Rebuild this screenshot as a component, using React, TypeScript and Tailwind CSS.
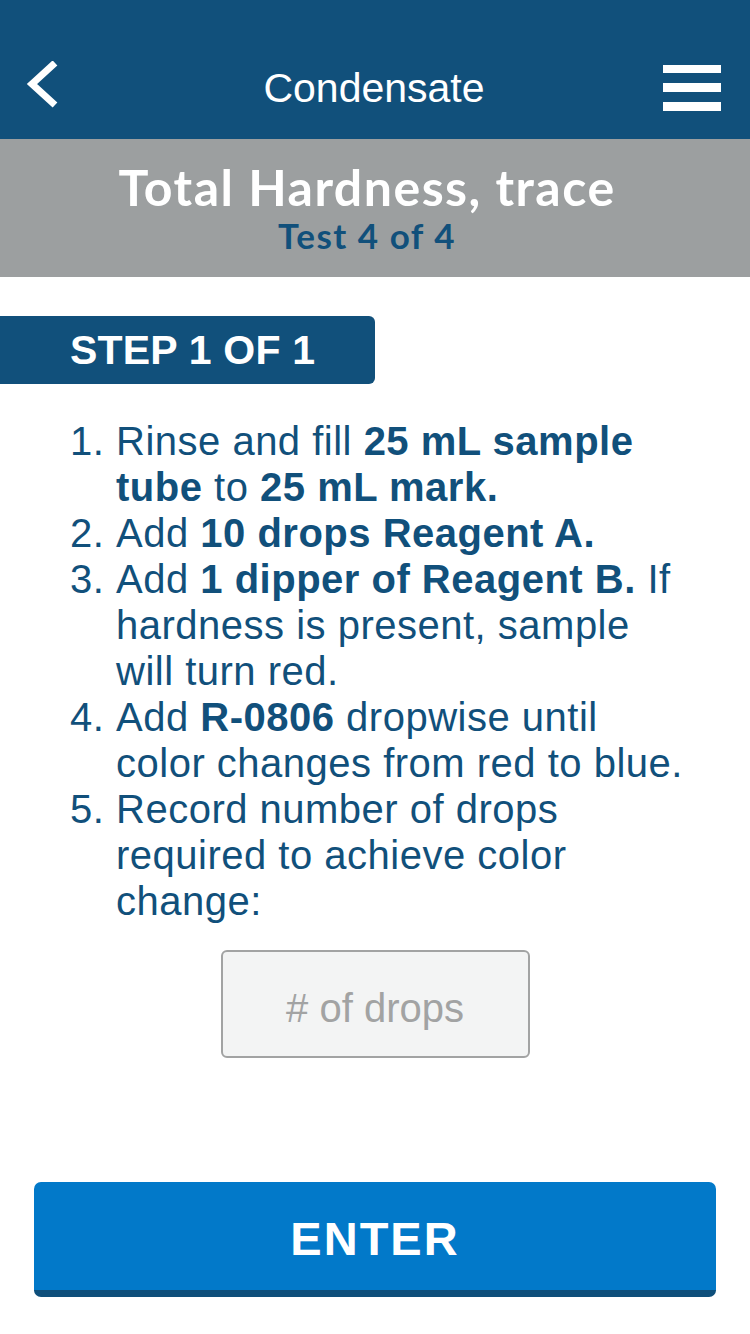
import React from 'react';

const steps: React.ReactNode[] = [
  <>Rinse and fill <b>25 mL sample</b><br /><b>tube</b> to <b>25 mL mark.</b></>,
  <>Add <b>10 drops Reagent A.</b></>,
  <>Add <b>1 dipper of Reagent B.</b> If<br />hardness is present, sample<br />will turn red.</>,
  <>Add <b>R-0806</b> dropwise until<br />color changes from red to blue.</>,
  <>Record number of drops<br />required to achieve color<br />change:</>,
];

export default function App() {
  return (
    <div className="w-[750px] h-[1334px] bg-white overflow-hidden font-['Liberation_Sans',Arial,sans-serif]">
      {/* Top bar */}
      <header className="h-[139px] bg-[#11507b] pt-[38px]">
        <div className="h-[100px] flex items-center pl-[24px] pr-[29px]">
          <div className="w-[60px]">
            <svg width="36" height="48" viewBox="0 0 36 48" className="-mt-[6px]">
              <polyline points="31,2 8,23 31,44" fill="none" stroke="white" strokeWidth="7" strokeLinejoin="miter" />
            </svg>
          </div>
          <h1 className="flex-1 text-center text-white text-[41px] leading-none pl-[3px]">Condensate</h1>
          <div className="w-[60px] flex flex-col items-end gap-[10px]">
            <span className="block w-[58px] h-[8px] bg-white" />
            <span className="block w-[58px] h-[9px] bg-white" />
            <span className="block w-[58px] h-[9px] bg-white" />
          </div>
        </div>
      </header>

      {/* Test title */}
      <section className="h-[138px] bg-[#9c9fa0] pt-[23px] pr-[16px] text-center font-['Lato',sans-serif] font-bold">
        <div className="text-white text-[50px] leading-[50px] tracking-[1.5px]">Total Hardness, trace</div>
        <div className="mt-[5px] text-[#11507b] text-[35px] leading-[36px] tracking-[1.5px]">Test 4 of 4</div>
      </section>

      {/* Step badge */}
      <div className="mt-[39px] w-[375px] h-[68px] bg-[#11507b] rounded-r-[6px] flex items-center pl-[70px]">
        <span className="text-white font-bold text-[41px] leading-none tracking-[0.2px]">STEP 1 OF 1</span>
      </div>

      {/* Instructions */}
      <ol className="mt-[34px] pl-[70px] text-[#11507b] text-[40px] leading-[46px] tracking-[0.5px]">
        {steps.map((s, i) => (
          <li key={i} className="flex">
            <span className="w-[46px] shrink-0">{i + 1}.</span>
            <span>{s}</span>
          </li>
        ))}
      </ol>

      {/* Drops input */}
      <div className="mt-[26px] flex justify-center">
        <input
          placeholder="# of drops"
          className="w-[309px] h-[108px] pt-[8px] bg-[#f3f4f4] border-2 border-[#a2a3a3] rounded-[6px] text-center text-[40px] text-[#11507b] placeholder:text-[#a2a3a3] outline-none font-['Liberation_Sans',Arial,sans-serif]"
        />
      </div>

      {/* Enter */}
      <div className="mt-[124px] px-[34px]">
        <button className="w-full h-[115px] pt-[6px] bg-[#0279c9] border-b-[7px] border-[#0e4f7b] rounded-[7px] text-white font-bold text-[47px] tracking-[2px] font-['Liberation_Sans',Arial,sans-serif]">
          ENTER
        </button>
      </div>
    </div>
  );
}
